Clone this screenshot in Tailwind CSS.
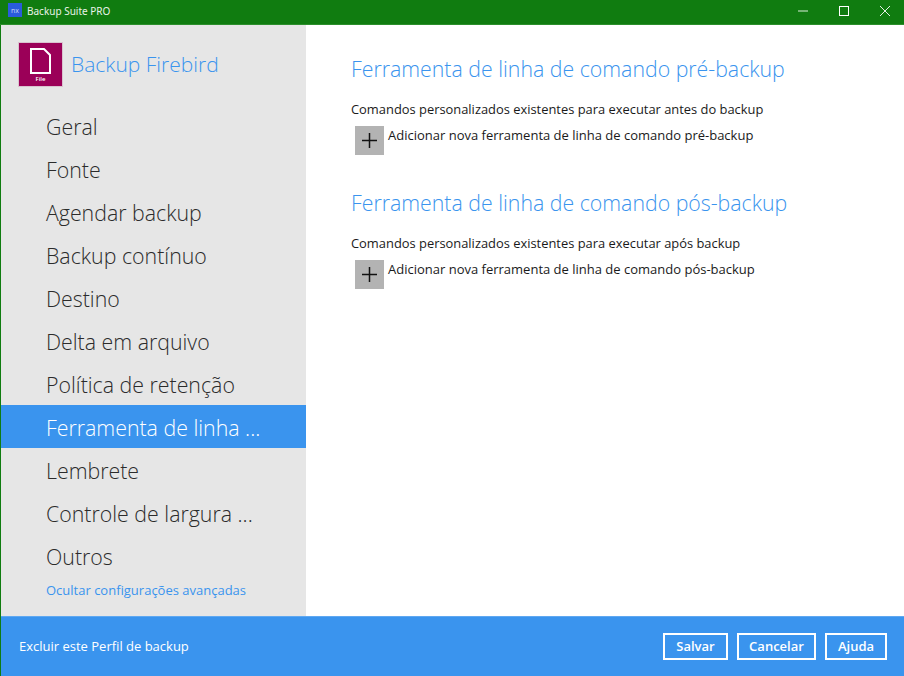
<!DOCTYPE html>
<html lang="pt">
  <head>
    <meta charset="UTF-8" />
    <title>Backup Suite PRO</title>
    <script src="https://cdn.jsdelivr.net/npm/@tailwindcss/browser@4"></script>
  </head>
  <body class="h-[676px] w-[904px] overflow-hidden bg-white font-['Open_Sans',sans-serif]">
    <div class="flex h-full flex-col border-l border-[#107c10]">
      <!-- title bar -->
      <header class="flex h-[25px] shrink-0 items-center -ml-px bg-[#107c10] border-b border-[#2c8f2c] pb-[2px] text-white">
        <div class="ml-2 -mt-[2px] flex h-[14px] w-[14px] items-center justify-center bg-[#2a5bdc] text-[7px] leading-none text-[#c8d4f5]">nx</div>
        <span class="ml-[5px] font-['Noto_Sans',sans-serif] text-[10px] text-[#e8f3e8]">Backup Suite PRO</span>
        <div class="ml-auto flex items-center">
          <svg class="mr-[31px]" width="10" height="10" viewBox="0 0 10 10"><path d="M0 5h10" stroke="#b9dcb9" stroke-width="1.2" /></svg>
          <svg class="mr-[31px]" width="10" height="10" viewBox="0 0 10 10"><rect x="0.5" y="0.5" width="9" height="9" fill="none" stroke="#fff" /></svg>
          <svg class="mr-[14px]" width="10" height="10" viewBox="0 0 10 10"><path d="M0 0l10 10M10 0L0 10" stroke="#e4f0e4" stroke-width="1" /></svg>
        </div>
      </header>

      <div class="flex min-h-0 flex-1">
        <!-- sidebar -->
        <aside class="w-[305px] shrink-0 bg-[#e6e6e6]">
          <div class="flex h-[79px] items-start pt-[18px] pl-[18px]">
            <div class="flex h-[43px] w-[43px] flex-col items-center bg-[#9b0058] pt-[5px] ring-1 ring-[#d9c3cf]">
              <svg width="21" height="26" viewBox="0 0 21 26"><path d="M1 1h13l6 6v18H1z" fill="none" stroke="#fff" stroke-width="2" /></svg>
              <span class="mt-[1px] text-[6px] font-semibold leading-[9px] text-white">File</span>
            </div>
            <span class="ml-[9px] mt-[2px] text-[21px] font-light leading-[38px] text-[#3a94ee]">Backup Firebird</span>
          </div>
          <nav class="text-[21.33px] font-light text-[#2b2b2b]">
            <div class="flex h-[43px] items-center pl-[45px] pt-[2px]">Geral</div>
            <div class="flex h-[43px] items-center pl-[45px] pt-[2px]">Fonte</div>
            <div class="flex h-[43px] items-center pl-[45px] pt-[2px]">Agendar backup</div>
            <div class="flex h-[43px] items-center pl-[45px] pt-[2px]">Backup contínuo</div>
            <div class="flex h-[43px] items-center pl-[45px] pt-[2px]">Destino</div>
            <div class="flex h-[43px] items-center pl-[45px] pt-[2px]">Delta em arquivo</div>
            <div class="flex h-[43px] items-center pl-[45px] pt-[2px]">Política de retenção</div>
            <div class="flex h-[43px] items-center bg-[#3a94ee] pl-[45px] pt-[2px] text-white">Ferramenta de linha ...</div>
            <div class="flex h-[43px] items-center pl-[45px] pt-[2px]">Lembrete</div>
            <div class="flex h-[43px] items-center pl-[45px] pt-[2px]">Controle de largura ...</div>
            <div class="flex h-[43px] items-center pl-[45px] pt-[2px]">Outros</div>
          </nav>
          <a class="mt-[3px] block pl-[45px] text-[13px] leading-[20px] text-[#3a94ee]">Ocultar configurações avançadas</a>
        </aside>

        <!-- content -->
        <main class="flex-1 pl-[45px] pt-[28px]">
          <section class="h-[134px]">
            <h2 class="text-[21.3px] font-light leading-[32px] text-[#3a94ee]">Ferramenta de linha de comando pré-backup</h2>
            <p class="mt-[15px] text-[12.9px] leading-[18px] text-[#1a1a1a]">Comandos personalizados existentes para executar antes do backup</p>
            <div class="mt-[8px] flex items-start pl-1">
              <span class="flex h-[29px] w-[29px] items-center justify-center bg-[#b3b3b3]">
                <svg width="15" height="15" viewBox="0 0 15 15"><path d="M7.5 0v15M0 7.5h15" stroke="#111" stroke-width="1.5" /></svg>
              </span>
              <span class="ml-[4px] text-[13px] leading-[18px] text-[#1a1a1a]">Adicionar nova ferramenta de linha de comando pré-backup</span>
            </div>
          </section>
          <section>
            <h2 class="text-[21.3px] font-light leading-[32px] text-[#3a94ee]">Ferramenta de linha de comando pós-backup</h2>
            <p class="mt-[15px] text-[12.9px] leading-[18px] text-[#1a1a1a]">Comandos personalizados existentes para executar após backup</p>
            <div class="mt-[8px] flex items-start pl-1">
              <span class="flex h-[29px] w-[29px] items-center justify-center bg-[#b3b3b3]">
                <svg width="15" height="15" viewBox="0 0 15 15"><path d="M7.5 0v15M0 7.5h15" stroke="#111" stroke-width="1.5" /></svg>
              </span>
              <span class="ml-[4px] text-[13px] leading-[18px] text-[#1a1a1a]">Adicionar nova ferramenta de linha de comando pós-backup</span>
            </div>
          </section>
        </main>
      </div>

      <!-- footer -->
      <footer class="flex h-[60px] shrink-0 items-center border-t border-[#5fa8f1] bg-[#3a94ee] pl-[18px] pr-[17px] text-[13px] text-white">
        <span class="mt-[1px]">Excluir este Perfil de backup</span>
        <div class="ml-auto flex gap-[9px] font-semibold">
          <button class="h-[27px] w-[65px] border-2 border-white leading-none">Salvar</button>
          <button class="h-[27px] w-[79px] border-2 border-white leading-none">Cancelar</button>
          <button class="h-[27px] w-[62px] border-2 border-white leading-none">Ajuda</button>
        </div>
      </footer>
    </div>
  </body>
</html>
